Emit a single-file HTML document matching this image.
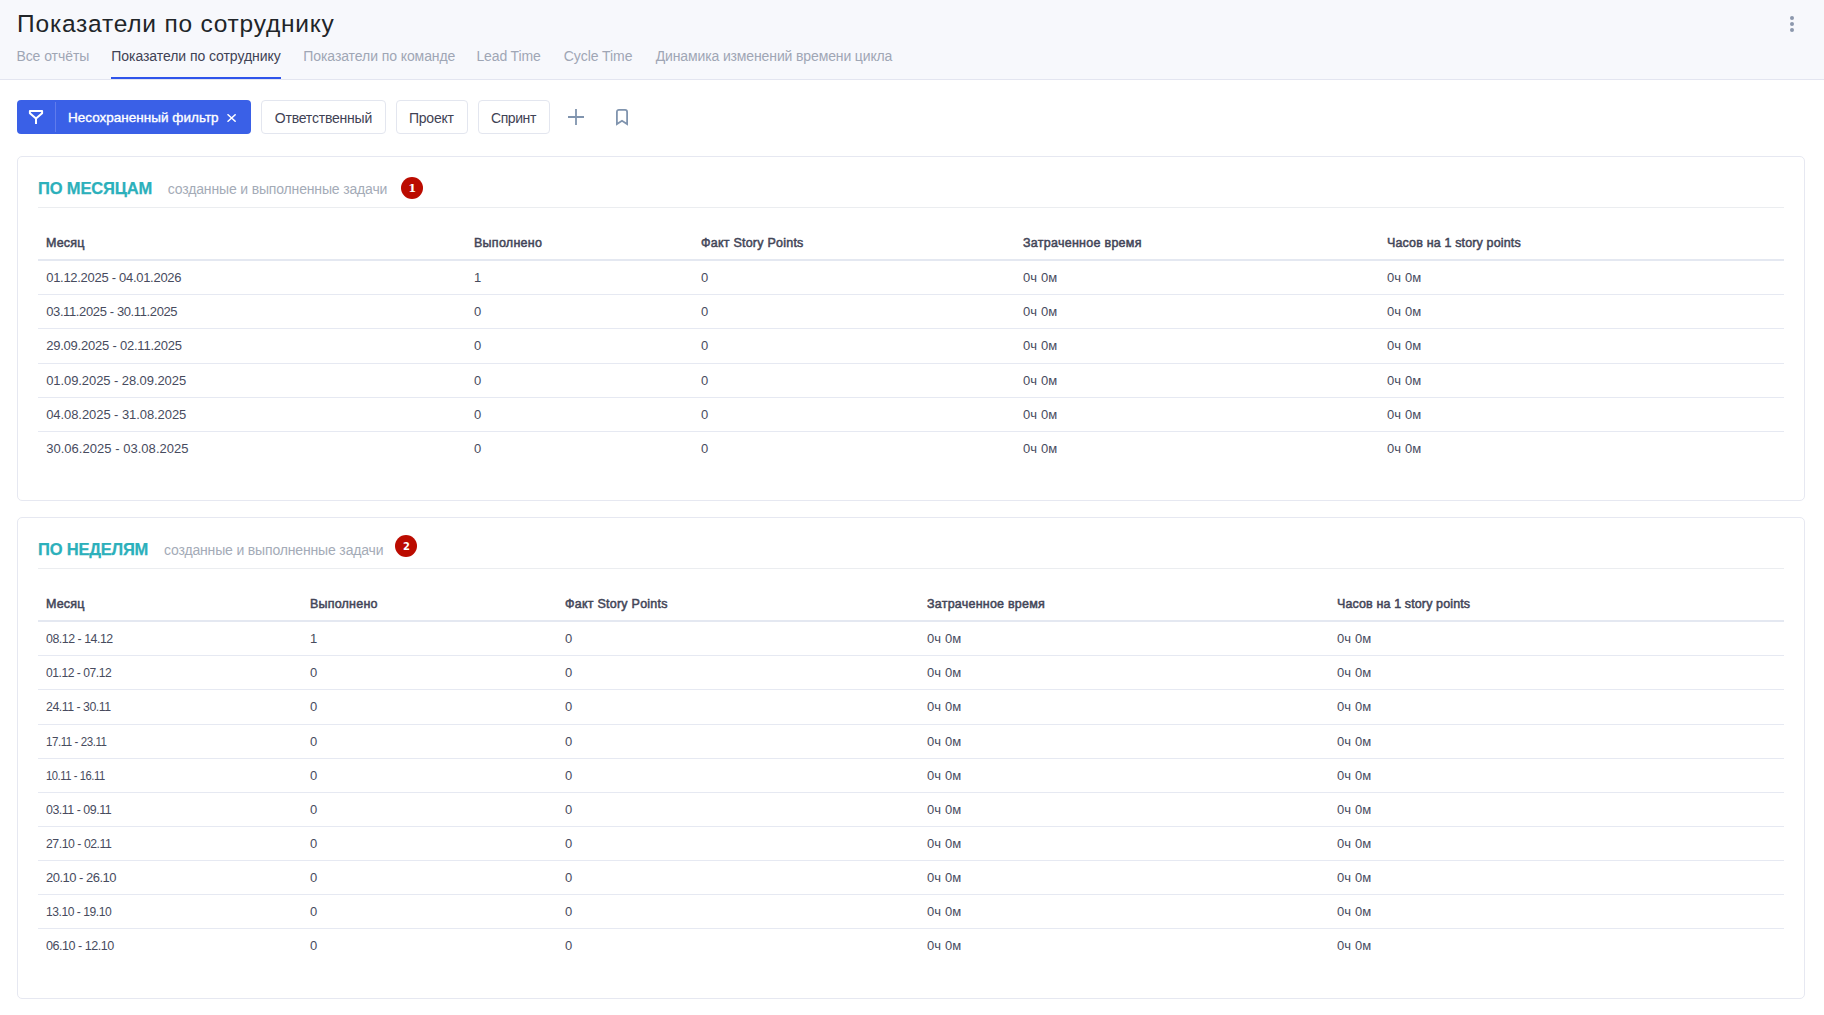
<!DOCTYPE html>
<html lang="ru">
<head>
<meta charset="utf-8">
<title>Показатели по сотруднику</title>
<style>
*{box-sizing:border-box;margin:0;padding:0}
html,body{width:1824px;height:1015px;overflow:hidden;background:#fff}
body{font-family:"Liberation Sans",sans-serif;color:#3f4254;position:relative}
.t{position:relative;display:inline-block;white-space:nowrap}
.hdr{position:absolute;left:0;top:0;width:1824px;height:80px;background:#f7f8fc;border-bottom:1px solid #e3e5f0}
.ttl{position:absolute;left:17px;top:9px;font-size:24.5px;line-height:30px;color:#212529;white-space:nowrap}
.tabs{position:absolute;left:0;top:48px;height:31px;white-space:nowrap}
.tab{position:absolute;top:0;font-size:14px;line-height:16px;color:#9fa6b5;white-space:nowrap}
.tab.act{color:#3f4254}
.tab.act i{position:absolute;left:111px;width:170px;top:29px;height:2px;background:#2f54eb}
.uline{position:absolute;left:111px;width:170px;top:77px;height:2px;background:#2f54eb}
.dots{position:absolute;left:1789px;top:15px;width:6px;height:18px}
.dots i{position:absolute;left:1px;width:4px;height:4px;border-radius:50%;background:#8c98ad}
.fbtn{position:absolute;left:17px;top:100px;width:234px;height:34px;background:#3a60e7;border-radius:4px;color:#fff;font-size:13px}
.fbtn .sep{position:absolute;left:38px;top:2px;width:1px;height:30px;background:#5f7bec}
.fbtn .txt{position:absolute;left:51px;top:9.5px;line-height:16px;font-weight:normal;-webkit-text-stroke:0.35px #fff;white-space:nowrap;font-size:13.5px}
.btn{position:absolute;top:100px;height:34px;border:1px solid #e3e6ef;border-radius:4px;background:#fff;font-size:14px;line-height:32px;color:#3f4254;white-space:nowrap}
.btn .t{position:absolute;top:1px;left:0}
.ico{position:absolute}
.card{position:absolute;left:17px;width:1788px;border:1px solid #e6e8f1;border-radius:5px;background:#fff}
.ch{position:absolute;left:20px;top:20px;right:20px;height:31px;border-bottom:1px solid #ebedf0}
.ch b{position:absolute;left:0;top:1px;font-size:16.5px;line-height:20px;color:#2cb0bb;-webkit-text-stroke:0.25px #2cb0bb;white-space:nowrap}
.ch .sub{position:absolute;top:4px;left:0;font-size:14px;line-height:16px;color:#a4abb7;white-space:nowrap}
.bdg{position:absolute;width:22px;height:22px;border-radius:50%;background:#bb0b00;color:#fff;text-align:center;font-weight:bold;font-size:10px;line-height:22px}
.tbl{position:absolute;left:20px;width:1746px;font-size:13px;color:#474b5e}
.tr{position:absolute;left:0;width:1746px;border-top:1px solid #e6e9f2}
.tr.first{border-top:none}
.th{position:absolute;left:0;width:1746px;top:0;height:36px;border-bottom:2px solid #e4e8f1;font-weight:normal;-webkit-text-stroke:0.5px #3f4254;font-size:12.5px}
.c{position:absolute;top:0;height:100%;white-space:nowrap}
</style>
</head>
<body>
<div class="hdr">
<div class="ttl"><span class="t" id="ttl" style="letter-spacing:0.78px;left:0.1px">Показатели по сотруднику</span></div>
<div class="tabs">
<div class="tab" style="left:16px"><span class="t" id="tab0" style="letter-spacing:-0.06px;left:0.4px">Все отчёты</span></div>
<div class="tab act" style="left:110px"><span class="t" id="tab1" style="letter-spacing:-0.06px;left:1.3px">Показатели по сотруднику</span></div>
<div class="tab" style="left:303px"><span class="t" id="tab2" style="letter-spacing:-0.08px;left:0.3px">Показатели по команде</span></div>
<div class="tab" style="left:476px"><span class="t" id="tab3" style="letter-spacing:-0.12px;left:0.4px">Lead Time</span></div>
<div class="tab" style="left:563px"><span class="t" id="tab4" style="letter-spacing:-0.06px;left:0.8px">Cycle Time</span></div>
<div class="tab" style="left:654px"><span class="t" id="tab5" style="letter-spacing:-0.13px;left:1.7px">Динамика изменений времени цикла</span></div>
</div>
<div class="uline"></div>
<div class="dots"><i style="top:1px"></i><i style="top:7px"></i><i style="top:13px"></i></div>
</div>
<div class="fbtn">
<svg class="ico" style="left:11px;top:9px" width="16" height="16" viewBox="0 0 16 16" fill="none" stroke="#fff" stroke-width="2" stroke-linejoin="round"><path d="M1.9 2.1H14.1V4.2L8 9.6L1.9 4.2ZM8 9.6V15"/></svg>
<div class="sep"></div>
<div class="txt"><span class="t" id="ftxt" style="letter-spacing:0.02px;left:-0.1px">Несохраненный фильтр</span></div>
<svg class="ico" style="left:210px;top:14px" width="9" height="8" viewBox="0 0 9 8" stroke="#fff" stroke-width="1.5"><path d="M0.5 0.3l8.2 7.4M8.7 0.3l-8.2 7.4"/></svg>
</div>
<div class="btn" style="left:261px;width:125px"><span class="t" id="b0" style="letter-spacing:-0.21px;left:12.8px">Ответственный</span></div>
<div class="btn" style="left:396px;width:72px"><span class="t" id="b1" style="letter-spacing:-0.21px;left:11.9px">Проект</span></div>
<div class="btn" style="left:478px;width:72px"><span class="t" id="b2" style="letter-spacing:-0.43px;left:12.0px">Спринт</span></div>
<svg class="ico" style="left:567px;top:108px" width="18" height="18" viewBox="0 0 18 18" stroke="#8094ae" stroke-width="1.8"><path d="M9 1v16M1 9h16"/></svg>
<svg class="ico" style="left:614px;top:108px" width="16" height="18" viewBox="0 0 16 18" fill="none" stroke="#8094ae" stroke-width="1.8" stroke-linejoin="miter"><path d="M2.9 16V3.9a2 2 0 0 1 2-2h6.2a2 2 0 0 1 2 2V16L8 12.8Z"/></svg>
<div class="card" style="top:156px;height:345px">
<div class="ch"><b><span class="t" id="ct1" style="letter-spacing:-0.14px;left:0.0px">ПО МЕСЯЦАМ</span></b><div class="sub"><span class="t" id="cs1" style="letter-spacing:-0.16px;left:129.8px">созданные и выполненные задачи</span></div></div>
<div class="bdg" style="left:383px;top:20px;font-family:'DejaVu Serif',serif;font-size:11.5px;line-height:22.5px;text-indent:0.5px">1</div>
<div class="tbl" style="top:68px">
<div class="th" style="height:36px">
<div class="c" style="left:8px;line-height:37px"><span class="t" id="ah0" style="letter-spacing:0.18px">Месяц</span></div>
<div class="c" style="left:436px;line-height:37px"><span class="t" id="ah1" style="letter-spacing:0.27px">Выполнено</span></div>
<div class="c" style="left:663px;line-height:37px"><span class="t" id="ah2" style="letter-spacing:0.23px">Факт Story Points</span></div>
<div class="c" style="left:985px;line-height:37px"><span class="t" id="ah3" style="letter-spacing:0.27px">Затраченное время</span></div>
<div class="c" style="left:1349px;line-height:37px"><span class="t" id="ah4" style="letter-spacing:0.15px">Часов на 1 story points</span></div>
</div>
<div class="tr first" style="top:36px;height:33px">
<div class="c" style="left:8px;line-height:33px"><span class="t" id="ar0c0" style="letter-spacing:-0.29px;left:0.2px">01.12.2025 - 04.01.2026</span></div>
<div class="c" style="left:436px;line-height:33px"><span class="t" id="ar0c1">1</span></div>
<div class="c" style="left:663px;line-height:33px"><span class="t" id="ar0c2">0</span></div>
<div class="c" style="left:985px;line-height:33px"><span class="t" id="ar0c3" style="letter-spacing:0.09px;left:-0.0px">0ч 0м</span></div>
<div class="c" style="left:1349px;line-height:33px"><span class="t" id="ar0c4" style="letter-spacing:0.09px;left:-0.0px">0ч 0м</span></div>
</div>
<div class="tr" style="top:69px;height:34px">
<div class="c" style="left:8px;line-height:33px"><span class="t" id="ar1c0" style="letter-spacing:-0.38px;left:0.2px">03.11.2025 - 30.11.2025</span></div>
<div class="c" style="left:436px;line-height:33px"><span class="t" id="ar1c1">0</span></div>
<div class="c" style="left:663px;line-height:33px"><span class="t" id="ar1c2">0</span></div>
<div class="c" style="left:985px;line-height:33px"><span class="t" id="ar1c3" style="letter-spacing:0.09px;left:-0.0px">0ч 0м</span></div>
<div class="c" style="left:1349px;line-height:33px"><span class="t" id="ar1c4" style="letter-spacing:0.09px;left:-0.0px">0ч 0м</span></div>
</div>
<div class="tr" style="top:103px;height:35px">
<div class="c" style="left:8px;line-height:34px"><span class="t" id="ar2c0" style="letter-spacing:-0.22px;left:0.2px">29.09.2025 - 02.11.2025</span></div>
<div class="c" style="left:436px;line-height:34px"><span class="t" id="ar2c1">0</span></div>
<div class="c" style="left:663px;line-height:34px"><span class="t" id="ar2c2">0</span></div>
<div class="c" style="left:985px;line-height:34px"><span class="t" id="ar2c3" style="letter-spacing:0.09px;left:-0.0px">0ч 0м</span></div>
<div class="c" style="left:1349px;line-height:34px"><span class="t" id="ar2c4" style="letter-spacing:0.09px;left:-0.0px">0ч 0м</span></div>
</div>
<div class="tr" style="top:138px;height:34px">
<div class="c" style="left:8px;line-height:33px"><span class="t" id="ar3c0" style="letter-spacing:-0.08px;left:0.2px">01.09.2025 - 28.09.2025</span></div>
<div class="c" style="left:436px;line-height:33px"><span class="t" id="ar3c1">0</span></div>
<div class="c" style="left:663px;line-height:33px"><span class="t" id="ar3c2">0</span></div>
<div class="c" style="left:985px;line-height:33px"><span class="t" id="ar3c3" style="letter-spacing:0.09px;left:-0.0px">0ч 0м</span></div>
<div class="c" style="left:1349px;line-height:33px"><span class="t" id="ar3c4" style="letter-spacing:0.09px;left:-0.0px">0ч 0м</span></div>
</div>
<div class="tr" style="top:172px;height:34px">
<div class="c" style="left:8px;line-height:33px"><span class="t" id="ar4c0" style="letter-spacing:-0.07px;left:0.2px">04.08.2025 - 31.08.2025</span></div>
<div class="c" style="left:436px;line-height:33px"><span class="t" id="ar4c1">0</span></div>
<div class="c" style="left:663px;line-height:33px"><span class="t" id="ar4c2">0</span></div>
<div class="c" style="left:985px;line-height:33px"><span class="t" id="ar4c3" style="letter-spacing:0.09px;left:-0.0px">0ч 0м</span></div>
<div class="c" style="left:1349px;line-height:33px"><span class="t" id="ar4c4" style="letter-spacing:0.09px;left:-0.0px">0ч 0м</span></div>
</div>
<div class="tr" style="top:206px;height:34px">
<div class="c" style="left:8px;line-height:33px"><span class="t" id="ar5c0" style="letter-spacing:0.03px;left:0.2px">30.06.2025 - 03.08.2025</span></div>
<div class="c" style="left:436px;line-height:33px"><span class="t" id="ar5c1">0</span></div>
<div class="c" style="left:663px;line-height:33px"><span class="t" id="ar5c2">0</span></div>
<div class="c" style="left:985px;line-height:33px"><span class="t" id="ar5c3" style="letter-spacing:0.09px;left:-0.0px">0ч 0м</span></div>
<div class="c" style="left:1349px;line-height:33px"><span class="t" id="ar5c4" style="letter-spacing:0.09px;left:-0.0px">0ч 0м</span></div>
</div>
</div>
</div>
<div class="card" style="top:517px;height:482px">
<div class="ch"><b><span class="t" id="ct2" style="letter-spacing:-0.20px;left:0.0px">ПО НЕДЕЛЯМ</span></b><div class="sub"><span class="t" id="cs2" style="letter-spacing:-0.16px;left:126.0px">созданные и выполненные задачи</span></div></div>
<div class="bdg" style="left:377px;top:17px;font-family:'DejaVu Sans',sans-serif;line-height:23.6px;text-indent:1.2px">2</div>
<div class="tbl" style="top:68px">
<div class="th" style="height:36px">
<div class="c" style="left:8px;line-height:37px"><span class="t" id="bh0" style="letter-spacing:0.18px">Месяц</span></div>
<div class="c" style="left:272px;line-height:37px"><span class="t" id="bh1" style="letter-spacing:0.21px">Выполнено</span></div>
<div class="c" style="left:527px;line-height:37px"><span class="t" id="bh2" style="letter-spacing:0.24px">Факт Story Points</span></div>
<div class="c" style="left:889px;line-height:37px"><span class="t" id="bh3" style="letter-spacing:0.23px">Затраченное время</span></div>
<div class="c" style="left:1299px;line-height:37px"><span class="t" id="bh4" style="letter-spacing:0.12px">Часов на 1 story points</span></div>
</div>
<div class="tr first" style="top:36px;height:33px">
<div class="c" style="left:8px;line-height:33px"><span class="t" id="br0c0" style="transform:scaleX(0.9514);transform-origin:0 50%;letter-spacing:-0.50px;left:0.2px">08.12 - 14.12</span></div>
<div class="c" style="left:272px;line-height:33px"><span class="t" id="br0c1">1</span></div>
<div class="c" style="left:527px;line-height:33px"><span class="t" id="br0c2">0</span></div>
<div class="c" style="left:889px;line-height:33px"><span class="t" id="br0c3" style="letter-spacing:0.09px;left:-0.0px">0ч 0м</span></div>
<div class="c" style="left:1299px;line-height:33px"><span class="t" id="br0c4" style="letter-spacing:0.09px;left:-0.0px">0ч 0м</span></div>
</div>
<div class="tr" style="top:69px;height:34px">
<div class="c" style="left:8px;line-height:33px"><span class="t" id="br1c0" style="transform:scaleX(0.9302);transform-origin:0 50%;letter-spacing:-0.50px;left:0.2px">01.12 - 07.12</span></div>
<div class="c" style="left:272px;line-height:33px"><span class="t" id="br1c1">0</span></div>
<div class="c" style="left:527px;line-height:33px"><span class="t" id="br1c2">0</span></div>
<div class="c" style="left:889px;line-height:33px"><span class="t" id="br1c3" style="letter-spacing:0.09px;left:-0.0px">0ч 0м</span></div>
<div class="c" style="left:1299px;line-height:33px"><span class="t" id="br1c4" style="letter-spacing:0.09px;left:-0.0px">0ч 0м</span></div>
</div>
<div class="tr" style="top:103px;height:35px">
<div class="c" style="left:8px;line-height:34px"><span class="t" id="br2c0" style="transform:scaleX(0.9476);transform-origin:0 50%;letter-spacing:-0.50px;left:0.2px">24.11 - 30.11</span></div>
<div class="c" style="left:272px;line-height:34px"><span class="t" id="br2c1">0</span></div>
<div class="c" style="left:527px;line-height:34px"><span class="t" id="br2c2">0</span></div>
<div class="c" style="left:889px;line-height:34px"><span class="t" id="br2c3" style="letter-spacing:0.09px;left:-0.0px">0ч 0м</span></div>
<div class="c" style="left:1299px;line-height:34px"><span class="t" id="br2c4" style="letter-spacing:0.09px;left:-0.0px">0ч 0м</span></div>
</div>
<div class="tr" style="top:138px;height:34px">
<div class="c" style="left:8px;line-height:33px"><span class="t" id="br3c0" style="transform:scaleX(0.8869);transform-origin:0 50%;letter-spacing:-0.50px;left:0.2px">17.11 - 23.11</span></div>
<div class="c" style="left:272px;line-height:33px"><span class="t" id="br3c1">0</span></div>
<div class="c" style="left:527px;line-height:33px"><span class="t" id="br3c2">0</span></div>
<div class="c" style="left:889px;line-height:33px"><span class="t" id="br3c3" style="letter-spacing:0.09px;left:-0.0px">0ч 0м</span></div>
<div class="c" style="left:1299px;line-height:33px"><span class="t" id="br3c4" style="letter-spacing:0.09px;left:-0.0px">0ч 0м</span></div>
</div>
<div class="tr" style="top:172px;height:34px">
<div class="c" style="left:8px;line-height:33px"><span class="t" id="br4c0" style="transform:scaleX(0.8620);transform-origin:0 50%;letter-spacing:-0.50px;left:0.2px">10.11 - 16.11</span></div>
<div class="c" style="left:272px;line-height:33px"><span class="t" id="br4c1">0</span></div>
<div class="c" style="left:527px;line-height:33px"><span class="t" id="br4c2">0</span></div>
<div class="c" style="left:889px;line-height:33px"><span class="t" id="br4c3" style="letter-spacing:0.09px;left:-0.0px">0ч 0м</span></div>
<div class="c" style="left:1299px;line-height:33px"><span class="t" id="br4c4" style="letter-spacing:0.09px;left:-0.0px">0ч 0м</span></div>
</div>
<div class="tr" style="top:206px;height:34px">
<div class="c" style="left:8px;line-height:33px"><span class="t" id="br5c0" style="transform:scaleX(0.9543);transform-origin:0 50%;letter-spacing:-0.50px;left:0.2px">03.11 - 09.11</span></div>
<div class="c" style="left:272px;line-height:33px"><span class="t" id="br5c1">0</span></div>
<div class="c" style="left:527px;line-height:33px"><span class="t" id="br5c2">0</span></div>
<div class="c" style="left:889px;line-height:33px"><span class="t" id="br5c3" style="letter-spacing:0.09px;left:-0.0px">0ч 0м</span></div>
<div class="c" style="left:1299px;line-height:33px"><span class="t" id="br5c4" style="letter-spacing:0.09px;left:-0.0px">0ч 0м</span></div>
</div>
<div class="tr" style="top:240px;height:34px">
<div class="c" style="left:8px;line-height:33px"><span class="t" id="br6c0" style="transform:scaleX(0.9452);transform-origin:0 50%;letter-spacing:-0.50px;left:0.2px">27.10 - 02.11</span></div>
<div class="c" style="left:272px;line-height:33px"><span class="t" id="br6c1">0</span></div>
<div class="c" style="left:527px;line-height:33px"><span class="t" id="br6c2">0</span></div>
<div class="c" style="left:889px;line-height:33px"><span class="t" id="br6c3" style="letter-spacing:0.09px;left:-0.0px">0ч 0м</span></div>
<div class="c" style="left:1299px;line-height:33px"><span class="t" id="br6c4" style="letter-spacing:0.09px;left:-0.0px">0ч 0м</span></div>
</div>
<div class="tr" style="top:274px;height:34px">
<div class="c" style="left:8px;line-height:33px"><span class="t" id="br7c0" style="transform:scaleX(0.9978);transform-origin:0 50%;letter-spacing:-0.50px;left:0.2px">20.10 - 26.10</span></div>
<div class="c" style="left:272px;line-height:33px"><span class="t" id="br7c1">0</span></div>
<div class="c" style="left:527px;line-height:33px"><span class="t" id="br7c2">0</span></div>
<div class="c" style="left:889px;line-height:33px"><span class="t" id="br7c3" style="letter-spacing:0.09px;left:-0.0px">0ч 0м</span></div>
<div class="c" style="left:1299px;line-height:33px"><span class="t" id="br7c4" style="letter-spacing:0.09px;left:-0.0px">0ч 0м</span></div>
</div>
<div class="tr" style="top:308px;height:34px">
<div class="c" style="left:8px;line-height:33px"><span class="t" id="br8c0" style="transform:scaleX(0.9302);transform-origin:0 50%;letter-spacing:-0.50px;left:0.2px">13.10 - 19.10</span></div>
<div class="c" style="left:272px;line-height:33px"><span class="t" id="br8c1">0</span></div>
<div class="c" style="left:527px;line-height:33px"><span class="t" id="br8c2">0</span></div>
<div class="c" style="left:889px;line-height:33px"><span class="t" id="br8c3" style="letter-spacing:0.09px;left:-0.0px">0ч 0м</span></div>
<div class="c" style="left:1299px;line-height:33px"><span class="t" id="br8c4" style="letter-spacing:0.09px;left:-0.0px">0ч 0м</span></div>
</div>
<div class="tr" style="top:342px;height:34px">
<div class="c" style="left:8px;line-height:33px"><span class="t" id="br9c0" style="transform:scaleX(0.9680);transform-origin:0 50%;letter-spacing:-0.50px;left:0.2px">06.10 - 12.10</span></div>
<div class="c" style="left:272px;line-height:33px"><span class="t" id="br9c1">0</span></div>
<div class="c" style="left:527px;line-height:33px"><span class="t" id="br9c2">0</span></div>
<div class="c" style="left:889px;line-height:33px"><span class="t" id="br9c3" style="letter-spacing:0.09px;left:-0.0px">0ч 0м</span></div>
<div class="c" style="left:1299px;line-height:33px"><span class="t" id="br9c4" style="letter-spacing:0.09px;left:-0.0px">0ч 0м</span></div>
</div>
</div>
</div>
</body>
</html>
